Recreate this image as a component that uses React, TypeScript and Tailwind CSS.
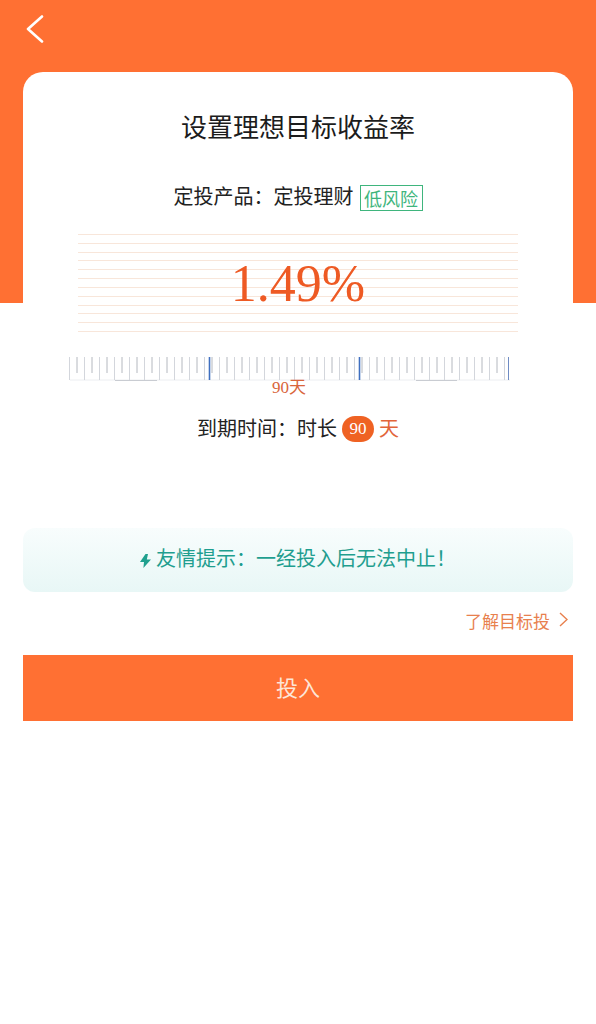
import React from 'react';

const cjk = "font-['Noto_Sans_CJK_SC','Noto_Sans',sans-serif]";
const num = "font-['Liberation_Serif','Noto_Sans_CJK_SC',serif]";

const lineIndexes = Array.from({ length: 12 }, (_, i) => i);

// ticks run every 7.5px, blue marks sit 20 ticks apart
const Ruler: React.FC = () => {
  const ticks = Array.from({ length: 59 }, (_, i) => i);
  return (
    <svg width="444" height="28" viewBox="0 0 444 28" className="block">
      <line x1="1" y1="24" x2="441" y2="24" stroke="#eceef1" strokeWidth="1" />
      <line x1="46" y1="24.5" x2="88" y2="24.5" stroke="#c9ccd2" strokeWidth="1" />
      <line x1="347" y1="24.5" x2="388" y2="24.5" stroke="#c9ccd2" strokeWidth="1" />
      {ticks.map((i) => {
        const x = 0.5 + i * 7.5;
        const long = i % 2 === 0;
        return (
          <line
            key={i}
            x1={x}
            y1="1"
            x2={x}
            y2={long ? 24 : 17}
            stroke={long ? '#d3d6dc' : '#b4b8bf'}
            strokeWidth="1"
          />
        );
      })}
      <line x1="140.5" y1="1" x2="140.5" y2="24" stroke="#3f6fc0" strokeWidth="1.6" />
      <line x1="290.5" y1="1" x2="290.5" y2="24" stroke="#3f6fc0" strokeWidth="1.6" />
      <line x1="439.5" y1="1" x2="439.5" y2="24" stroke="#6f8cc4" strokeWidth="1" />
    </svg>
  );
};

const App: React.FC = () => {
  return (
    <div className={`${cjk} relative min-h-[1024px] w-[596px] bg-white overflow-hidden`}>
      <div className="h-[303px] bg-[#ff7033] pt-[15px] pl-[25px]">
        <svg width="20" height="28" viewBox="0 0 20 28" fill="none">
          <path d="M17 1.5 L3 14 L17 26.5" stroke="#fff" strokeWidth="2.6" strokeLinecap="round" strokeLinejoin="round" />
        </svg>
      </div>

      <div className="mx-[23px] -mt-[231px] rounded-t-[20px] bg-white flex flex-col items-center">
        <h1 className="mt-[35px] h-[38px] text-[26px] leading-[38px] font-normal text-[#1c1c1c]">
          设置理想目标收益率
        </h1>

        <div className="mt-[37px] h-[28px] flex items-center text-[20px] text-[#222]">
          <span>定投产品：</span>
          <span>定投理财</span>
          <span className="ml-[6px] mt-[4px] w-[63px] h-[26px] border border-[#3fb57d] text-[#3fb57d] text-[18px] leading-[24px] text-center">
            低风险
          </span>
        </div>

        <div className="relative mt-[24px] w-[440px] h-[98px] flex flex-col justify-between">
          {lineIndexes.map((i) => (
            <div key={i} className="h-px bg-[#f8e6da]" />
          ))}
          <div className={`${num} absolute inset-x-0 top-[21px] text-center text-[52px] leading-[58px] text-[#ee5a24]`}>
            1.49%
          </div>
        </div>

        <div className="relative mt-[24px] w-[444px] h-[44px] ml-[-14px]">
          <Ruler />
          <div className="absolute left-[203px] top-[20px] text-[17px] leading-[20px] text-[#d9653b] whitespace-nowrap">
            <span className={num}>90</span>天
          </div>
        </div>

        <div className="mt-[13px] h-[30px] flex items-center text-[20px] text-[#222]">
          <span>到期时间：时长</span>
          <span className={`${num} ml-[5px] mt-[2px] w-[32px] h-[26px] rounded-full bg-[#ef6223] text-white text-[17px] leading-[26px] text-center`}>
            90
          </span>
          <span className="ml-[5px] text-[#e2653a]">天</span>
        </div>
      </div>

      <div className="mx-[23px] mt-[85px] h-[64px] rounded-[12px] pb-[5px] bg-gradient-to-b from-[#f8fdfd] to-[#e8f7f6] flex items-center justify-center text-[#1f9e8f]">
        <svg width="11" height="14" viewBox="0 0 11 14" className="mt-[6px] mr-[5px]">
          <path d="M5.5 0 L0 8 H4 L3.4 14 L11 5.6 H6.8 L8 0 Z" fill="#1fa08e" />
        </svg>
        <span className="text-[20px] leading-[28px]">友情提示：一经投入后无法中止！</span>
      </div>

      <div className="mx-[23px] mt-[15px] h-[28px] flex items-center justify-end pr-[5px] text-[#e8804e]">
        <span className="text-[17px] leading-[28px]">了解目标投</span>
        <svg width="9" height="15" viewBox="0 0 9 15" fill="none" className="ml-[9px] mb-[3px]">
          <path d="M1 1 L8 7.5 L1 14" stroke="#e8804e" strokeWidth="1.4" />
        </svg>
      </div>

      <button className="mx-[23px] mt-[20px] w-[550px] h-[66px] pb-[3px] bg-[#ff7033] text-[#fde6d8] text-[22px] flex items-center justify-center">
        投入
      </button>
    </div>
  );
};

export default App;
